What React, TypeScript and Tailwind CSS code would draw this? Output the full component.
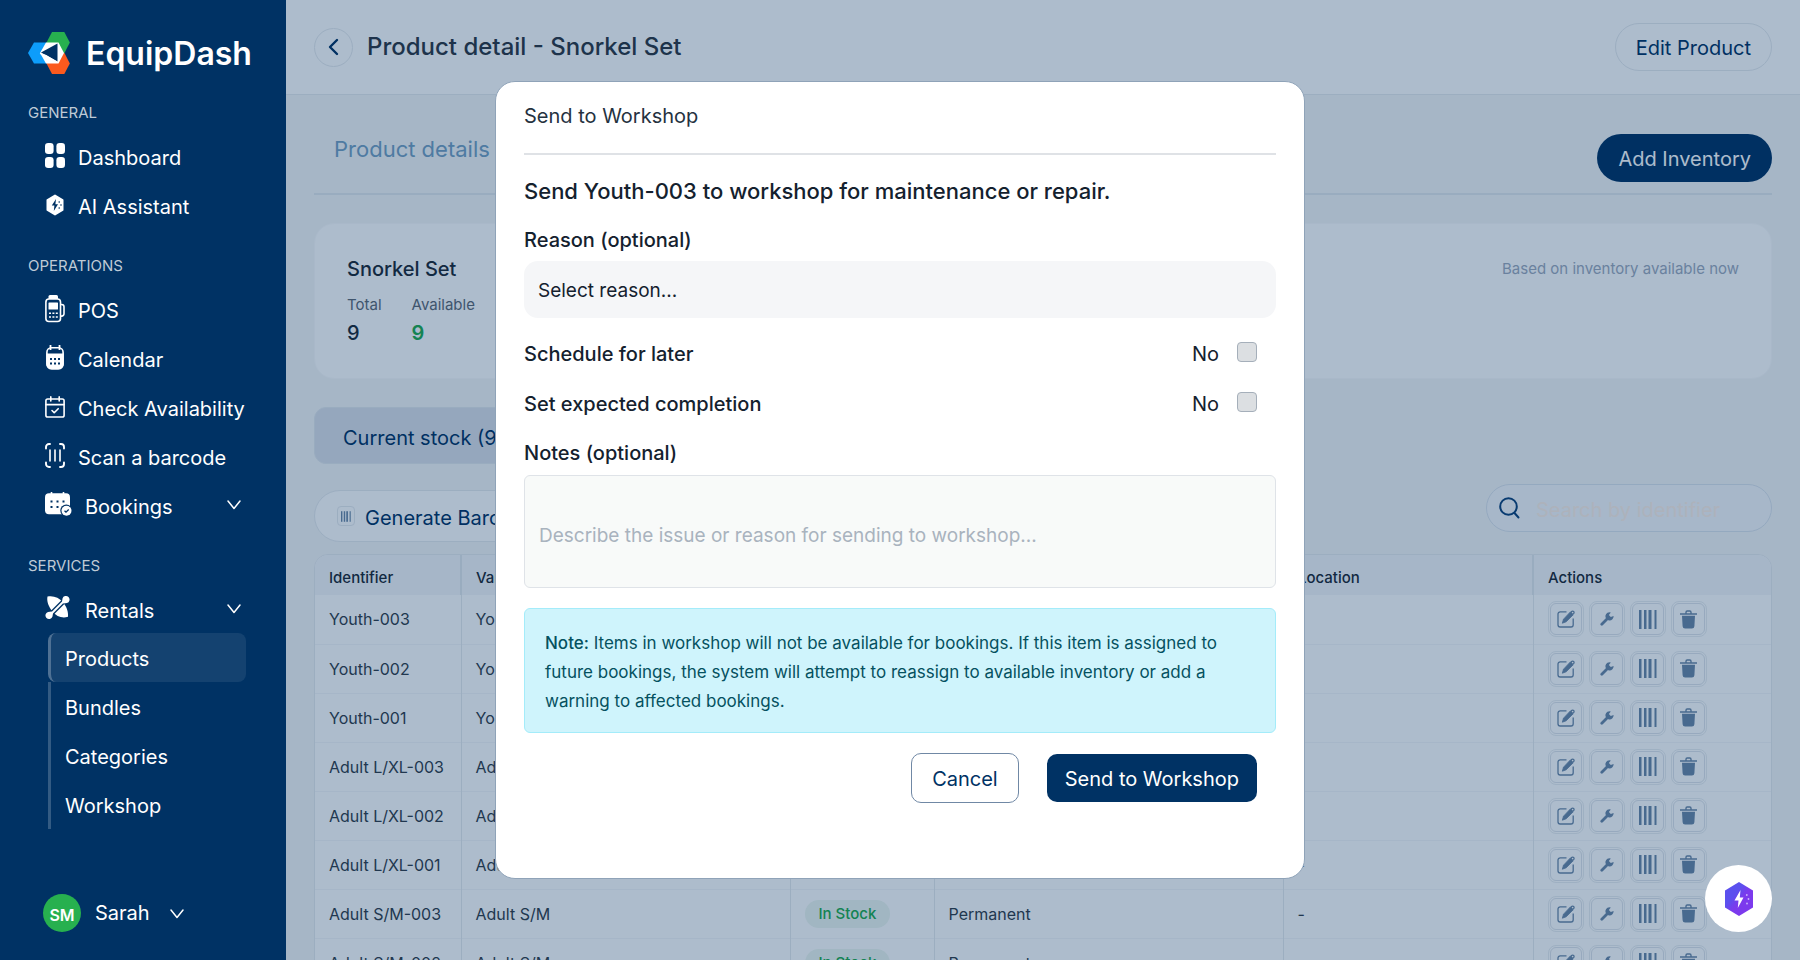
import { useState } from 'react'
import type { ReactNode } from 'react'

const STOCK = [
  { id: 'Youth-003', variant: 'Youth' },
  { id: 'Youth-002', variant: 'Youth' },
  { id: 'Youth-001', variant: 'Youth' },
  { id: 'Adult L/XL-003', variant: 'Adult L/XL' },
  { id: 'Adult L/XL-002', variant: 'Adult L/XL' },
  { id: 'Adult L/XL-001', variant: 'Adult L/XL' },
  { id: 'Adult S/M-003', variant: 'Adult S/M' },
  { id: 'Adult S/M-002', variant: 'Adult S/M' },
  { id: 'Adult S/M-001', variant: 'Adult S/M' },
]

const RENTAL_LINKS = ['Products', 'Bundles', 'Categories', 'Workshop']

function Logo() {
  return (
    <svg width="42" height="42" viewBox="0 0 42 42" aria-hidden>
      <path d="M0 21 6 10.5h12L24 21l-6 10.5H6z" fill="#0d9dfb" />
      <path d="M24 0h12.300l5.500 10.500L36.500 21H24l-5.500-10.500z" fill="#27b04f" />
      <path d="M24 21h12.500l5.300 10.500L36.300 42H24l-5.500-10.500z" fill="#fb5a1e" />
      <path d="M18 10.500h12.500L36 21l-5.500 10.500H18L12 21z" fill="#fff" />
      <path d="M13 20.500 29.500 11.500v18z" fill="#003264" />
      <path d="M12 21.500 18 23.500 29 30" fill="none" stroke="#fff" strokeWidth="1.200" />
    </svg>
  )
}

function DashboardIcon() {
  return (
    <svg width="20" height="25" viewBox="0 0 20 25" fill="currentColor" aria-hidden>
      <rect x="0" y="0" width="8.600" height="11" rx="3.200" />
      <rect x="11.400" y="0" width="8.600" height="11" rx="3.200" />
      <rect x="0" y="14" width="8.600" height="11" rx="3.200" />
      <rect x="11.400" y="14" width="8.600" height="11" rx="3.200" />
    </svg>
  )
}

function AssistantIcon() {
  return (
    <svg width="20" height="22" viewBox="0 0 20 22" aria-hidden>
      <path d="M10 1.500 17.500 6v10L10 20.500 2.500 16V6z" fill="#fff" stroke="#fff" strokeWidth="2" strokeLinejoin="round" />
      <path d="M11 5 6.800 11.500h2.600L8.800 17l4.200-6.800h-2.600z" fill="#003264" />
      <g fill="#003264">
        <circle cx="14.200" cy="8" r=".8" />
        <circle cx="16" cy="11" r=".8" />
        <circle cx="14.200" cy="14" r=".8" />
      </g>
    </svg>
  )
}

function PosIcon() {
  return (
    <svg width="20" height="28" viewBox="0 0 20 28" fill="none" stroke="#fff" strokeWidth="1.600" aria-hidden>
      <path d="M3.500 4V1.500A1.500 1.500 0 0 1 5 0h6.500A1.500 1.500 0 0 1 13 1.500V4z" fill="#fff" stroke="none" />
      <rect x=".9" y="4" width="14.600" height="22.500" rx="3" />
      <rect x="3.500" y="7.500" width="9.500" height="7" rx=".6" fill="#fff" stroke="none" />
      <path d="M15.500 9.500h1.200a2.300 2.300 0 0 1 2.300 2.300v7a2.300 2.300 0 0 1-2.300 2.300h-1.200" />
      <path d="M4 18.200h2M7.400 18.200h2M10.800 18.200h2M4 22h2M7.400 22h2M10.800 22h2" strokeWidth="1.500" />
    </svg>
  )
}

function CalendarIcon() {
  return (
    <svg width="20" height="25" viewBox="0 0 20 25" aria-hidden>
      <path d="M5.500 0v5M14.500 0v5" stroke="#fff" strokeWidth="1.800" />
      <rect x="1.900" y="2.800" width="16.200" height="21" rx="4.500" fill="none" stroke="#fff" strokeWidth="1.600" />
      <path d="M1.300 8.500h17.400v10.300a5.600 5.600 0 0 1-5.600 5.600H6.900a5.600 5.600 0 0 1-5.600-5.600z" fill="#fff" />
      <g fill="#003264">
        <rect x="5" y="13" width="2" height="2" />
        <rect x="9" y="13" width="2" height="2" />
        <rect x="13" y="13" width="2" height="2" />
        <rect x="5" y="17.500" width="2" height="2" />
        <rect x="9" y="17.500" width="2" height="2" />
        <rect x="13" y="17.500" width="2" height="2" />
      </g>
    </svg>
  )
}

function CheckCalendarIcon() {
  return (
    <svg width="20" height="22" viewBox="0 0 20 22" fill="none" stroke="#fff" strokeWidth="1.600" strokeLinecap="round" strokeLinejoin="round" aria-hidden>
      <rect x=".9" y="3" width="18.200" height="18" rx="1.800" />
      <path d="M1 8.600h18M5.800.9v4M14.200.9v4" />
      <path d="m7 14.500 2.200 2.200 4-4" />
    </svg>
  )
}

function ScanIcon() {
  return (
    <svg width="20" height="25" viewBox="0 0 20 25" fill="none" stroke="#fff" strokeLinecap="round" aria-hidden>
      <path d="M1 5.500V4a3 3 0 0 1 3-3h1M15 1h1a3 3 0 0 1 3 3v1.500M19 19.500V21a3 3 0 0 1-3 3h-1M5 24H4a3 3 0 0 1-3-3v-1.500" strokeWidth="1.900" />
      <path d="M5 7v11M10 7v11M15 7v11" strokeWidth="1.600" />
    </svg>
  )
}

function BookingsIcon() {
  return (
    <svg width="27" height="24" viewBox="0 0 27 24" className="shrink-0" aria-hidden>
      <path d="M6.500 0v4M18.500 0v4" stroke="#fff" strokeWidth="1.600" />
      <rect x="0" y="1.300" width="25" height="21" rx="4" fill="#fff" />
      <g fill="#003264">
        <rect x="5.500" y="8.500" width="2" height="2" />
        <rect x="11.500" y="8.500" width="2" height="2" />
        <rect x="17.500" y="8.500" width="2" height="2" />
        <rect x="5.500" y="14" width="2" height="2" />
        <rect x="11.500" y="14" width="2" height="2" />
        <circle cx="21.300" cy="18.500" r="6" />
      </g>
      <circle cx="21.500" cy="18.700" r="5" fill="#fff" />
      <path d="m19.500 18.700 1.500 1.400 2.700-2.600" fill="none" stroke="#003264" strokeWidth="1.300" />
    </svg>
  )
}

function RentalsIcon() {
  return (
    <svg width="25" height="25" viewBox="0 0 25 25" className="shrink-0" aria-hidden>
      <path d="M2.500 1.600C8.500.6 14 2.500 18 7.500c4 4.500 5.500 10 5 14.300C17 23.500 11.500 21.500 7.500 16.500 3.500 12 1.500 6 2.500 1.600z" fill="#fff" />
      <path d="M3 22 22 3" stroke="#003264" strokeWidth="4.600" />
      <path d="M3 22 22 3" stroke="#fff" strokeWidth="2" />
      <path d="M17.500 3.500a3.600 3.600 0 1 1 4.500 4.500l-3.500.500-1.500-1.500zM7.500 21.500A3.600 3.600 0 1 1 3 17l3.500-.500L8 18z" fill="#fff" />
    </svg>
  )
}

function Chevron() {
  return (
    <svg width="14" height="10" viewBox="0 0 14 10" fill="none" stroke="currentColor" strokeWidth="1.500" strokeLinecap="round" strokeLinejoin="round" aria-hidden>
      <path d="m1 1 6 7.500L13 1" />
    </svg>
  )
}

function EditIcon() {
  return (
    <svg width="18" height="18" viewBox="0 0 18 18" fill="none" aria-hidden>
      <path d="M9.500 1.800H3.200A2.200 2.200 0 0 0 1 4v10.800A2.200 2.200 0 0 0 3.200 17H14a2.200 2.200 0 0 0 2.200-2.200V8.500" stroke="currentColor" strokeWidth="1.300" />
      <path d="m13.300 2 2.900 2.800-7 7-3.900 1.400 1.200-4z" fill="currentColor" stroke="currentColor" strokeWidth=".8" />
      <circle cx="15.600" cy="2.600" r="1.500" stroke="currentColor" strokeWidth="1.300" />
    </svg>
  )
}

function WrenchIcon() {
  return (
    <svg width="14" height="14" viewBox="0 0 14 14" aria-hidden>
      <path d="M1.800 12.200 8 6" stroke="currentColor" strokeWidth="2.800" strokeLinecap="round" />
      <path d="M10.800.4A4.100 4.100 0 1 0 13.600 4l-2.800.900-1.900-1.800z" fill="currentColor" />
    </svg>
  )
}

function BarcodeIcon({ small = false }: { small?: boolean }) {
  return (
    <svg width={small ? 10 : 18} height={small ? 11 : 19} viewBox="0 0 18 19" fill="currentColor" aria-hidden>
      <rect x="0" y="0" width="2.500" height="19" />
      <rect x="5" y="0" width="2.500" height="19" />
      <rect x="9.500" y="0" width="3" height="19" />
      <rect x="15.500" y="0" width="2" height="19" />
    </svg>
  )
}

function TrashIcon() {
  return (
    <svg width="17" height="19" viewBox="0 0 17 19" aria-hidden>
      <path d="M6 3.300V2.200A1.200 1.200 0 0 1 7.200 1h2.600A1.200 1.200 0 0 1 11 2.200v1.100M0 4h17" fill="none" stroke="currentColor" strokeWidth="1.400" />
      <path d="M2 5.800h13l-.6 10.400a2.500 2.500 0 0 1-2.500 2.300H5.100a2.500 2.500 0 0 1-2.500-2.300z" fill="currentColor" />
    </svg>
  )
}

function NavItem({ icon, label, open }: { icon: ReactNode; label: string; open?: boolean }) {
  return (
    <a href="#" className="flex h-[49px] items-center pr-[17px] text-xl whitespace-nowrap">
      <span className={open === undefined ? 'mr-[13px] flex pb-1' : 'mr-[15px] flex w-[25px] pb-1.5'}>{icon}</span>
      <span className="flex-1">{label}</span>
      {open !== undefined && (
        <span className="pb-1">
          <Chevron />
        </span>
      )}
    </a>
  )
}

function NavLabel({ children }: { children: ReactNode }) {
  return <h2 className="mb-2.5 text-[15px] leading-5 text-[#bfcad6]">{children}</h2>
}

function Sidebar() {
  return (
    <aside className="relative z-20 flex w-[286px] shrink-0 flex-col bg-[#003264] px-7 pt-8 text-white">
      <div className="flex items-center gap-4">
        <Logo />
        <span className="pt-0.5 text-[32px] leading-10 font-semibold">EquipDash</span>
      </div>

      <nav className="mt-[29px]">
        <NavLabel>GENERAL</NavLabel>
        <div className="mb-[25px] pl-[17px]">
          <NavItem icon={<DashboardIcon />} label="Dashboard" />
          <NavItem icon={<AssistantIcon />} label="AI Assistant" />
        </div>

        <NavLabel>OPERATIONS</NavLabel>
        <div className="mb-[25px] pl-[17px]">
          <NavItem icon={<PosIcon />} label="POS" />
          <NavItem icon={<CalendarIcon />} label="Calendar" />
          <NavItem icon={<CheckCalendarIcon />} label="Check Availability" />
          <NavItem icon={<ScanIcon />} label="Scan a barcode" />
          <NavItem icon={<BookingsIcon />} label="Bookings" open />
        </div>

        <NavLabel>SERVICES</NavLabel>
        <div className="pl-[17px]">
          <NavItem icon={<RentalsIcon />} label="Rentals" open />
        </div>
        <ul className="-mt-0.5 mr-3 ml-5 text-xl">
          {RENTAL_LINKS.map((link) => (
            <li key={link}>
              <a
                href="#"
                className={
                  link === 'Products'
                    ? 'flex h-[49px] items-center rounded-lg border-l-3 border-white/25 bg-white/8 px-3.5 pt-0.5'
                    : 'flex h-[49px] items-center border-l-3 border-white/20 px-3.5 pt-0.5'
                }
              >
                {link}
              </a>
            </li>
          ))}
        </ul>
      </nav>

      <button className="mt-auto mb-7 ml-[15px] flex items-center text-left text-xl">
        <span className="mr-3.5 flex size-[38px] items-center justify-center rounded-full bg-[#27b04f] pt-1 text-base font-semibold">
          SM
        </span>
        Sarah
        <span className="ml-5 pt-0.5">
          <Chevron />
        </span>
      </button>
    </aside>
  )
}

function ActionButton({ label, children }: { label: string; children: ReactNode }) {
  return (
    <span className="flex size-9 items-center justify-center rounded-lg border border-[#e9edf1]">
      <button
        aria-label={label}
        className="flex size-8 items-center justify-center rounded-md border border-[#dfe4ea] text-[#6b87a6]"
      >
        {children}
      </button>
    </span>
  )
}

function StockTable() {
  return (
    <div className="mt-3 overflow-hidden rounded-t-[14px] border border-[#e6eaee] bg-white">
      <table className="w-full table-fixed text-left">
        <colgroup>
          <col className="w-[146px]" />
          <col />
          <col className="w-[144px]" />
          <col className="w-[349px]" />
          <col className="w-[250px]" />
          <col className="w-[238px]" />
        </colgroup>
        <thead>
          <tr className="h-10 bg-[#f5f7f9] text-[15px] text-[#1b2733]">
            {['Identifier', 'Variant', 'Status', 'Type', 'Location', 'Actions'].map((name) => (
              <th key={name} className="border-r-2 border-[#e2e7ec] px-3.5 pt-1.5 font-medium last:border-r-0">
                {name}
              </th>
            ))}
          </tr>
        </thead>
        <tbody className="text-base text-[#313c48]">
          {STOCK.map((item) => (
            <tr key={item.id} className="h-[49px] border-b border-[#f5f7f9]">
              <td className="border-r border-[#e6eaee] px-3.5 whitespace-nowrap">{item.id}</td>
              <td className="border-r border-[#e6eaee] px-3.5">{item.variant}</td>
              <td className="border-r border-[#e6eaee] px-3.5">
                <span className="inline-block rounded-full bg-[#edf7f0] px-3.5 text-[15px] leading-7 font-medium text-[#20ab4c]">
                  In Stock
                </span>
              </td>
              <td className="border-r border-[#e6eaee] px-3.5">Permanent</td>
              <td className="border-r border-[#e6eaee] px-3.5">-</td>
              <td className="px-3.5">
                <div className="flex gap-[5px]">
                  <ActionButton label="Edit"><EditIcon /></ActionButton>
                  <ActionButton label="Send to workshop"><WrenchIcon /></ActionButton>
                  <ActionButton label="Barcode"><BarcodeIcon /></ActionButton>
                  <ActionButton label="Delete"><TrashIcon /></ActionButton>
                </div>
              </td>
            </tr>
          ))}
        </tbody>
      </table>
    </div>
  )
}

function ProductPage() {
  return (
    <main className="min-w-0 flex-1 overflow-hidden bg-[#f5f6f7] text-[#1b2733]">
      <header className="flex h-[95px] items-center border-b border-[#e6eaee] bg-white px-7">
        <button
          aria-label="Back"
          className="mr-3.5 flex size-[39px] items-center justify-center rounded-full border border-[#e6eaee] text-[#003264]"
        >
          <svg width="11" height="18" viewBox="0 0 11 18" fill="none" stroke="currentColor" strokeWidth="2.400" strokeLinecap="round" strokeLinejoin="round" aria-hidden>
            <path d="M9 2 2 9l7 7" />
          </svg>
        </button>
        <h1 className="flex-1 text-2xl font-medium text-[#2d3641]">Product detail - Snorkel Set</h1>
        <button className="h-12 rounded-full border border-[#e6eaee] px-5 pt-0.5 text-xl text-[#003264]">Edit Product</button>
      </header>

      <div className="px-7">
        <div className="flex h-[100px] items-end justify-between border-b-2 border-[#e2e7ec] pb-[11px]">
          <a href="#" className="px-5 pb-4 text-[22px] text-[#749fc1]">Product details</a>
          <button className="h-12 rounded-full bg-[#003264] px-[21px] pt-0.5 text-xl text-white">Add Inventory</button>
        </div>

        <section className="mt-7 flex h-[156px] items-start justify-between rounded-[20px] border border-[#f9fafb] bg-white px-8 pt-[31px]">
          <div>
            <h2 className="text-xl leading-7 font-medium">Snorkel Set</h2>
            <dl className="mt-2.5 flex gap-[30px]">
              <div>
                <dt className="text-[15px] leading-6 text-[#5d6874]">Total</dt>
                <dd className="mt-1 text-xl leading-6 font-medium">9</dd>
              </div>
              <div>
                <dt className="text-[15px] leading-6 text-[#5d6874]">Available</dt>
                <dd className="mt-1 text-xl leading-6 font-semibold text-[#20ab4c]">9</dd>
              </div>
            </dl>
          </div>
          <p className="text-[15px] leading-7 text-[#9ca9bc]">Based on inventory available now</p>
        </section>

        <div className="mt-7 flex">
          <button className="h-[57px] rounded-xl border border-[#e2e7ec] bg-[#dce1e9] px-7 pt-1 text-xl text-[#003264]">
            Current stock (9)
          </button>
        </div>

        <div className="mt-5 flex items-start justify-between">
          <button className="mt-1.5 flex h-[52px] items-center gap-2.5 rounded-full border border-[#e6eaee] bg-white px-[22px] text-xl text-[#003264]">
            <span className="flex h-5 w-[18px] items-center justify-center rounded border border-[#e6eaee] text-[#6b87a6]">
              <BarcodeIcon small />
            </span>
            <span className="pt-1">Generate Barcodes</span>
          </button>
          <label className="flex h-12 w-[286px] items-center gap-4 rounded-full border border-[#dbe3ec] bg-[#f7f8fb] px-3">
            <svg className="shrink-0 text-[#0d4279]" width="21" height="22" viewBox="0 0 21 22" fill="none" stroke="currentColor" strokeWidth="2" strokeLinecap="round" aria-hidden>
              <circle cx="9.500" cy="9.500" r="8.300" />
              <path d="m15.500 16 4 4.500" />
            </svg>
            <input
              type="text"
              aria-label="Search by identifier"
              placeholder="Search by identifier"
              className="h-full min-w-0 flex-1 bg-transparent pt-1 text-xl outline-none placeholder:text-[#fff0e6]"
            />
          </label>
        </div>

        <StockTable />
      </div>
    </main>
  )
}

interface ToggleRowProps {
  id: string
  label: string
  checked: boolean
  onChange: (value: boolean) => void
}

function ToggleRow({ id, label, checked, onChange }: ToggleRowProps) {
  return (
    <div className="flex h-[50px] items-center pr-[19px] text-xl">
      <label htmlFor={id} className="flex-1 font-medium">{label}</label>
      <span className="mr-[18px]">{checked ? 'Yes' : 'No'}</span>
      <input
        id={id}
        type="checkbox"
        checked={checked}
        onChange={(e) => onChange(e.target.checked)}
        className="mb-1 size-5 appearance-none rounded border border-[#a5afba] bg-[#dcdfe2] checked:bg-[#003264]"
      />
    </div>
  )
}

function WorkshopDialog() {
  const [later, setLater] = useState(false)
  const [completion, setCompletion] = useState(false)

  return (
    <div
      role="dialog"
      aria-labelledby="dialog-title"
      className="w-[810px] rounded-[20px] border border-[#8fa3b8] bg-white px-7 pb-[75px] text-[#14212e]"
    >
      <h2 id="dialog-title" className="border-b-2 border-[#dfe2e6] pt-5 pb-[23px] text-xl leading-7 text-[#25323f]">
        Send to Workshop
      </h2>
      <p className="mt-5 text-[22px] leading-8 font-medium">Send Youth-003 to workshop for maintenance or repair.</p>

      <label htmlFor="reason" className="mt-[19px] block text-xl leading-7 font-medium">Reason (optional)</label>
      <select id="reason" className="mt-[7px] block h-[57px] w-full appearance-none rounded-[14px] bg-[#f5f6f8] px-3.5 pt-1 text-[19px]">
        <option>Select reason...</option>
      </select>

      <div className="mt-[11px]">
        <ToggleRow id="later" label="Schedule for later" checked={later} onChange={setLater} />
        <ToggleRow id="completion" label="Set expected completion" checked={completion} onChange={setCompletion} />
      </div>

      <label htmlFor="notes" className="mt-2.5 block text-xl leading-7 font-medium">Notes (optional)</label>
      <textarea
        id="notes"
        placeholder="Describe the issue or reason for sending to workshop..."
        className="mt-2 block h-[113px] w-full resize-none rounded-md border border-[#dfe3e8] bg-[#f8faf9] px-3.5 pt-[46px] text-[19px] leading-7 placeholder:text-[#a9b3be]"
      />

      <p className="mt-5 rounded-md border border-[#a4ecfa] bg-[#cff4fc] pt-5 pr-9 pb-4 pl-5 text-[17px] leading-[29px] text-[#055160]">
        <strong className="font-medium">Note:</strong> Items in workshop will not be available for bookings. If this item is
        assigned to future bookings, the system will attempt to reassign to available inventory or add a warning to affected
        bookings.
      </p>

      <div className="mt-5 flex items-center justify-end gap-7 pr-[19px] text-xl">
        <button className="h-[50px] rounded-[10px] border border-[#7088a5] px-5 pt-0.5 text-[#003264]">Cancel</button>
        <button className="h-12 rounded-[10px] bg-[#003264] px-[18px] pt-0.5 text-white">Send to Workshop</button>
      </div>
    </div>
  )
}

function AssistantButton() {
  return (
    <button
      aria-label="AI Assistant"
      className="fixed right-7 bottom-7 z-30 flex size-[67px] items-center justify-center rounded-full bg-white"
    >
      <svg width="28" height="34" viewBox="0 0 28 34" aria-hidden>
        <defs>
          <linearGradient id="hex" x1="0" y1="0" x2="1" y2="1">
            <stop offset="0.350" stopColor="#5b50ee" />
            <stop offset="0.550" stopColor="#7c3aed" />
          </linearGradient>
        </defs>
        <path d="M14 0 28 8.500v17L14 34 0 25.500v-17z" fill="url(#hex)" />
        <path d="M15.500 8 9.500 18.500h4L12.800 26l5.700-10.500h-3.700z" fill="#fff" />
        <g fill="#c9b5fa">
          <circle cx="21.800" cy="13" r=".9" />
          <circle cx="23.500" cy="17" r=".9" />
          <circle cx="22" cy="21.500" r=".9" />
        </g>
      </svg>
    </button>
  )
}

export default function App() {
  return (
    <div className="flex h-screen overflow-hidden font-['Inter','Liberation_Sans',sans-serif]">
      <Sidebar />
      <ProductPage />
      <div className="fixed inset-0 z-10 bg-[#003060]/32" />
      <div className="pointer-events-none fixed inset-0 z-20 flex items-center justify-center">
        <div className="pointer-events-auto">
          <WorkshopDialog />
        </div>
      </div>
      <AssistantButton />
    </div>
  )
}
